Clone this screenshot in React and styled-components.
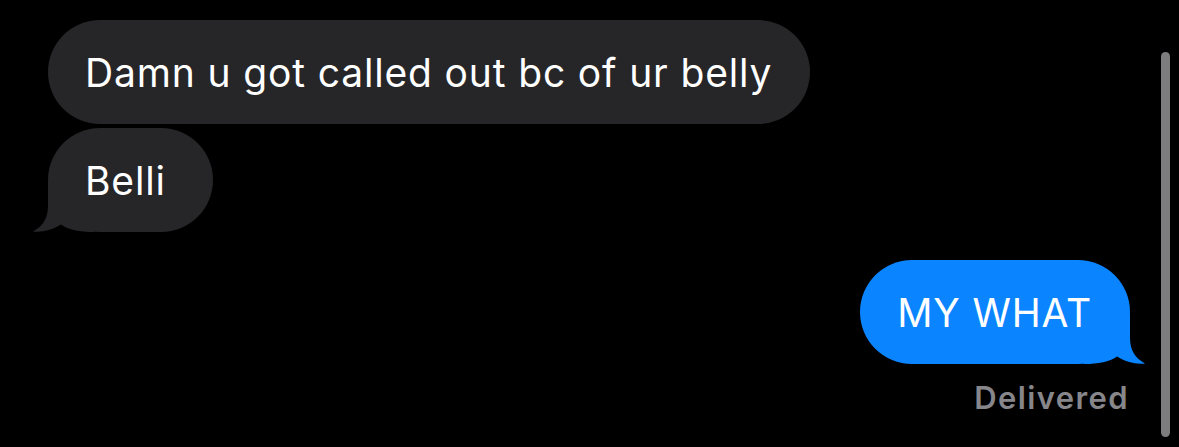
import React from 'react';
import styled, { createGlobalStyle } from 'styled-components';

const GlobalStyle = createGlobalStyle`
  html, body {
    margin: 0;
    background: #000;
  }
  body {
    font-family: Inter, "Liberation Sans", sans-serif;
    -webkit-font-smoothing: antialiased;
  }
`;

const Screen = styled.div`
  position: relative;
  height: 447px;
  overflow: hidden;
  padding: 20px 49px 0 48px;
  box-sizing: border-box;
`;

const Thread = styled.div`
  display: flex;
  flex-direction: column;
`;

const Bubble = styled.div`
  position: relative;
  align-self: ${(p) => (p.$sent ? 'flex-end' : 'flex-start')};
  min-width: ${(p) => p.$minWidth || 0}px;
  box-sizing: border-box;
  height: 104px;
  padding: 0 38px 0 37px;
  display: flex;
  align-items: center;
  border-radius: 52px;
  background: ${(p) => (p.$sent ? '#0a84ff' : '#262629')};
  color: #fff;
  font-size: 39px;
  letter-spacing: 0.85px;
  white-space: nowrap;
  margin-top: ${(p) => p.$gap || 0}px;
`;

const Label = styled.span`
  position: relative;
  z-index: 1;
`;

const Tail = styled.svg`
  position: absolute;
  bottom: 0;
  width: 62px;
  height: 50px;
  ${(p) =>
    p.$sent
      ? 'right: -16px; transform: scaleX(-1);'
      : 'left: -16px;'}
`;

const Status = styled.div`
  align-self: flex-end;
  margin: 15px 1px 0 0;
  font-size: 31px;
  font-weight: 600;
  letter-spacing: 1.4px;
  color: #86868b;
`;

const Scrollbar = styled.div`
  position: absolute;
  top: 52px;
  right: 9px;
  width: 9px;
  height: 385px;
  border-radius: 5px;
  background: #7d7d7f;
`;

const BubbleTail = ({ sent }) => (
  <Tail $sent={sent} viewBox="0 0 62 50">
    <path
      d="M16 0 L16 24 C16 36 11 44 1 49.5 C11 50.5 21 47.5 29 42.5 C37 48 47 50 62 50 L62 0 Z"
      fill={sent ? '#0a84ff' : '#262629'}
    />
  </Tail>
);

const App = () => {
  return (
    <>
      <GlobalStyle />
      <Screen>
        <Thread>
          <Bubble>
            <Label>Damn u got called out bc of ur belly</Label>
          </Bubble>
          <Bubble $gap={4} $minWidth={165}>
            <Label>Belli</Label>
            <BubbleTail />
          </Bubble>
          <Bubble $sent $gap={28}>
            <Label>MY WHAT</Label>
            <BubbleTail sent />
          </Bubble>
          <Status>Delivered</Status>
        </Thread>
        <Scrollbar />
      </Screen>
    </>
  );
};

export default App;
